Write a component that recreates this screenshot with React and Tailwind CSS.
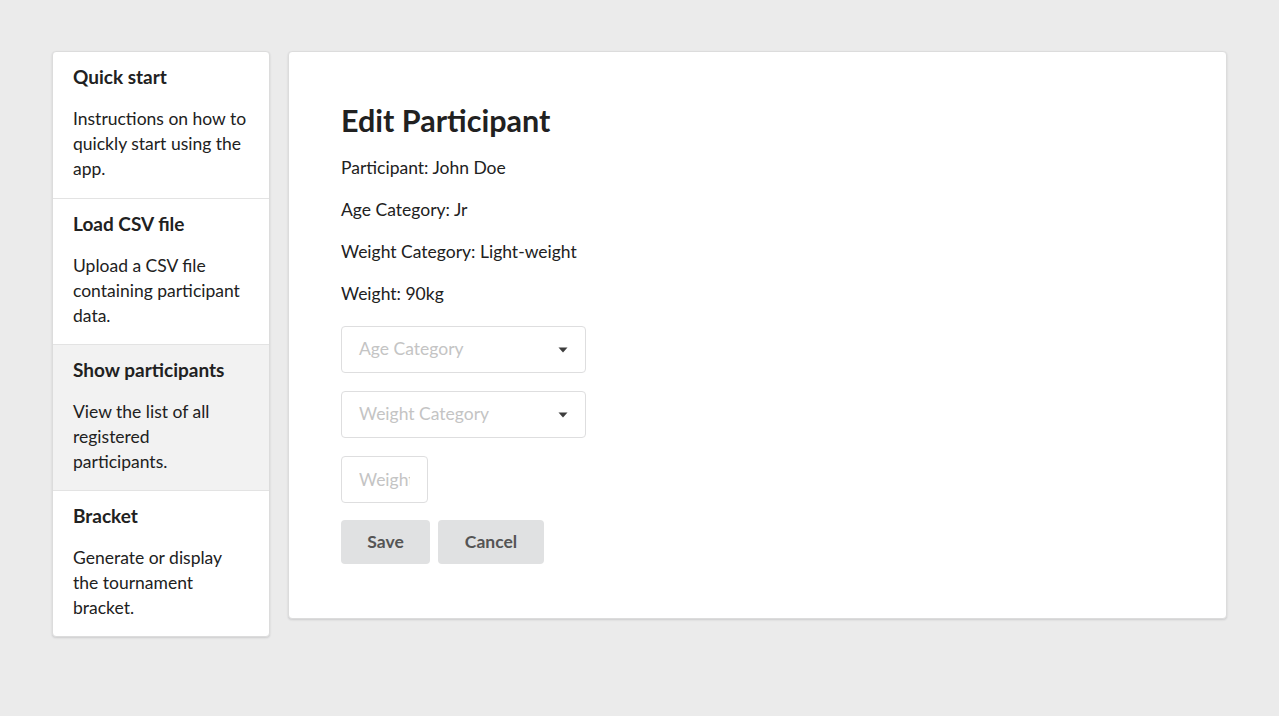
import { useState } from 'react'

const menuItems = [
  { title: 'Quick start', text: 'Instructions on how to quickly start using the app.' },
  { title: 'Load CSV file', text: 'Upload a CSV file containing participant data.' },
  { title: 'Show participants', text: 'View the list of all registered participants.' },
  { title: 'Bracket', text: 'Generate or display the tournament bracket.' },
]

function Caret() {
  return (
    <svg width="10" height="6" viewBox="0 0 10 6" className="text-[#3d3d3d]">
      <path d="M0.5 0.5 H9.5 L5 5.5 Z" fill="currentColor" />
    </svg>
  )
}

function SelectBox({ placeholder }) {
  return (
    <div className="flex h-[47px] w-[245px] items-center justify-between rounded-[4px] border border-[#dededf] bg-white pl-[17px] pr-[17px] text-[17.5px] text-[#c4c4c4]">
      <span>{placeholder}</span>
      <Caret />
    </div>
  )
}

export default function App() {
  const [active] = useState('Show participants')

  return (
    <div className="min-h-[716px] bg-[#ebebeb] font-['Lato','Noto_Sans',sans-serif] text-[#212121]">
      <div className="flex items-start gap-[18px] pl-[52px] pt-[51px]">
        <div className="w-[218px] overflow-hidden rounded-[4px] border border-[#dcdcdc] bg-white shadow-[0_1px_2px_rgba(34,36,38,0.15)]">
          {menuItems.map((item, i) => (
            <div
              key={item.title}
              className={`h-[146px] px-[20px] pt-[13px] ${i > 0 ? 'border-t border-[#e3e3e3]' : ''} ${item.title === active ? 'bg-[#f2f2f2]' : ''}`}
            >
              <div className="text-[19px] font-bold leading-[24px]">{item.title}</div>
              <p className="mt-[17px] w-[174px] text-[17.5px] leading-[25px]">{item.text}</p>
            </div>
          ))}
        </div>

        <div className="h-[568px] w-[939px] rounded-[4px] border border-[#dcdcdc] bg-white px-[52px] pt-[48px] shadow-[0_1px_2px_rgba(34,36,38,0.15)]">
          <h1 className="text-[30.5px] font-bold leading-[40px]">Edit Participant</h1>
          <div className="mt-[15px] flex flex-col gap-[17px] text-[17.5px] leading-[25px]">
            <p>Participant: John Doe</p>
            <p>Age Category: Jr</p>
            <p>Weight Category: Light-weight</p>
            <p>Weight: 90kg</p>
          </div>
          <div className="mt-[20px] flex flex-col gap-[18px]">
            <SelectBox placeholder="Age Category" />
            <SelectBox placeholder="Weight Category" />
            <input
              type="text"
              placeholder="Weight"
              className="h-[47px] w-[87px] rounded-[4px] border border-[#dededf] bg-white px-[17px] text-[17.5px] text-[#212121] outline-none placeholder:text-[#c4c4c4]"
            />
          </div>
          <div className="mt-[17px] flex gap-[8px]">
            <button className="h-[44px] w-[89px] rounded-[4px] bg-[#e0e1e2] text-[17.5px] font-bold text-[#555]">Save</button>
            <button className="h-[44px] w-[106px] rounded-[4px] bg-[#e0e1e2] text-[17.5px] font-bold text-[#555]">Cancel</button>
          </div>
        </div>
      </div>
    </div>
  )
}
